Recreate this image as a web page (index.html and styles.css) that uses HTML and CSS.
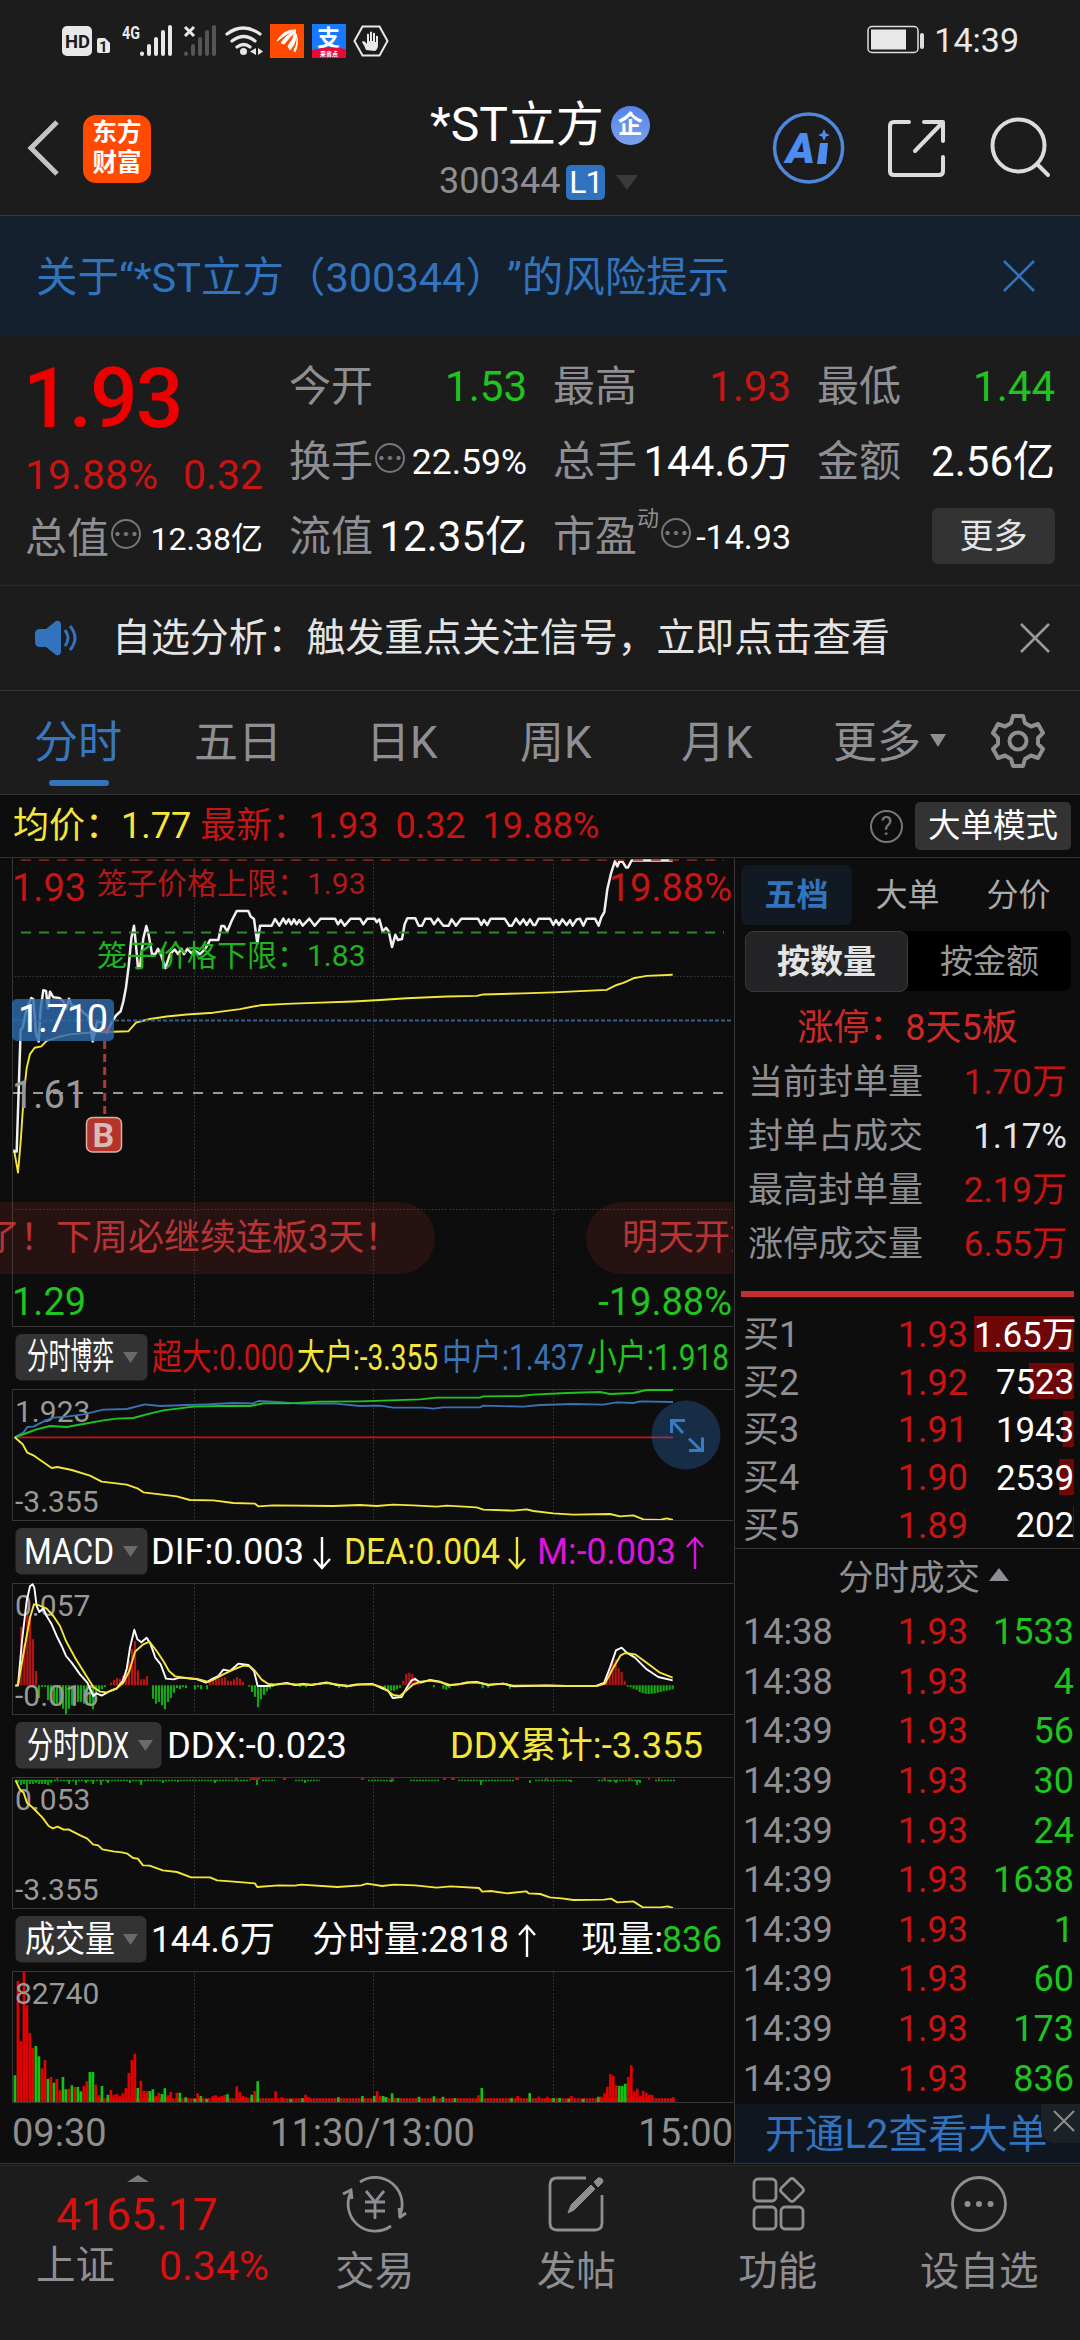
FILE: index.html
```html
<!DOCTYPE html>
<html lang="zh-CN">
<head>
<meta charset="utf-8">
<title>*ST立方 300344</title>
<link rel="stylesheet" href="styles.css">
</head>
<body>
<div class="app">

<div class="status">
  <svg class="status-left" width="400" height="72" viewBox="0 0 400 72">
    <rect x="62" y="26" width="30" height="30" rx="5" fill="#e8e8e8"/>
    <text x="65" y="48" font-size="19" font-weight="700" fill="#1c1c1c" textLength="25" lengthAdjust="spacingAndGlyphs">HD</text>
    <path d="M97 40q0-2 2-2h6l5 5v8q0 2-2 2h-9q-2 0-2-2z" fill="#e8e8e8"/>
    <text x="99" y="52" font-size="15" font-weight="700" fill="#1c1c1c">1</text>
    <text x="122" y="39" font-size="18" font-weight="700" fill="#e8e8e8" textLength="18" lengthAdjust="spacingAndGlyphs">4G</text>
    <g stroke-width="4" stroke-linecap="round">
      <path d="M142 53.5v.5M149 46v8M156 39v15M163 32v22M170 27v27" stroke="#e8e8e8"/>
      <path d="M186 53.5v.5M193 46v8M200 39v15M207 32v22M214 27v27" stroke="#555"/>
    </g>
    <path d="M185 27l9 9m0-9l-9 9" stroke="#e8e8e8" stroke-width="3"/>
    <g fill="none" stroke="#e8e8e8" stroke-width="3.2" stroke-linecap="round">
      <path d="M227 34q16-12 33 0M232 41q12-9 23 0M237 47q7-5 13 0"/>
    </g>
    <circle cx="243.500" cy="51.500" r="3.500" fill="#e8e8e8"/>
    <path d="M256 48v7l-6-3.500zM258 48v7l5-3.500z" fill="#e8e8e8"/>
    <rect x="270" y="24" width="34" height="34" fill="#ff4a00"/>
    <path d="M277 41q7-12 19-11-9 3-19 11zM281 43q6-9 15-12-6 6-12 13zM288 46q6-7 7-15 3 10-5 19zM294 50q5-8 2-16 3 10-1 18z" fill="#fff" stroke="#fff"/>
    <rect x="312" y="24" width="34" height="34" fill="#1878ff"/>
    <text x="317" y="46" font-size="23" font-weight="700" fill="#fff">支</text>
    <path d="M312 50q17-5 34-1v9h-34z" fill="#e60b34"/>
    <text x="320" y="56" font-size="6" font-weight="700" fill="#fff">来省点</text>
    <path d="M362.500 26.500h17l8 14.500-8 14.500h-17l-8-14.500z" fill="none" stroke="#e8e8e8" stroke-width="2"/>
    <path d="M366 50q-2-5-4-8l1-1q2 0 4 3V34q2-1 2 1v6h1v-9q2-1 2 0v9h1v-8q2-1 2 1v8h1v-6q2-1 2 1v8q0 4-3 6z" fill="#e8e8e8"/>
  </svg>
  <div class="status-right">
    <svg width="54" height="30" viewBox="0 0 54 30"><rect x="1" y="1.500" width="50" height="26" rx="4" fill="none" stroke="#ddd" stroke-width="1.500"/><rect x="4" y="4.500" width="35" height="20" fill="#e8e8e8"/></svg>
    <i class="nub"></i><span>14:39</span>
  </div>
</div>

<header class="head">
  <svg class="back" width="36" height="60" viewBox="0 0 36 60"><path d="M33 4L7 30l26 26" fill="none" stroke="#c4c4c4" stroke-width="5"/></svg>
  <div class="logo"><span>东方</span><span>财富</span></div>
  <div class="title">
    <div class="name">*ST立方<b class="ent">企</b></div>
    <div class="code">300344<b class="l1">L1</b><i class="tri-d"></i></div>
  </div>
  <svg class="tools" width="300" height="80" viewBox="770 108 300 80" fill="none">
    <circle cx="808.600" cy="148" r="34" stroke="#4f87dc" stroke-width="3.500"/>
    <text x="786" y="163" font-size="43" font-weight="900" font-style="italic" fill="#4d8cf0" textLength="29" lengthAdjust="spacingAndGlyphs">A</text>
    <path d="M820 143h8l-2 21h-9z" fill="#4d8cf0"/>
    <path d="M824 129l2 4.500 4 1.500-4 1.500-2 4.500-2-4.500-4-1.500 4-1.500z" fill="#4d8cf0"/>
    <g stroke="#dcdcdc" stroke-width="4" stroke-linecap="round" stroke-linejoin="round">
      <path d="M909 122h-15q-4 0-4 4v45q0 4 4 4h45q4 0 4-4v-14M924 122h19v19M942 123l-27 28"/>
      <ellipse cx="1018.500" cy="145.500" rx="26" ry="26"/><path d="M1037 164l11 11"/>
    </g>
  </svg>
</header>

<div class="risk"><span>关于“*ST立方（300344）”的风险提示</span>
  <svg width="34" height="34" viewBox="0 0 34 34"><path d="M2 2l30 30M32 2L2 32" stroke="#3273bd" stroke-width="2.600"/></svg>
</div>

<section class="stats">
  <div class="c0">
    <div class="big">1.93</div>
    <div class="chg"><span>19.88%</span><span>0.32</span></div>
    <div class="cell"><label>总值</label><i class="dots"></i><span class="v s32">12.38亿</span></div>
  </div>
  <div class="col">
    <div class="cell"><label>今开</label><span class="v g">1.53</span></div>
    <div class="cell"><label>换手</label><i class="dots"></i><span class="v s36">22.59%</span></div>
    <div class="cell"><label>流值</label><span class="v">12.35亿</span></div>
  </div>
  <div class="col">
    <div class="cell"><label>最高</label><span class="v r">1.93</span></div>
    <div class="cell"><label>总手</label><span class="v">144.6万</span></div>
    <div class="cell"><label>市盈<sup>动</sup></label><i class="dots"></i><span class="v s34">-14.93</span></div>
  </div>
  <div class="col">
    <div class="cell"><label>最低</label><span class="v g">1.44</span></div>
    <div class="cell"><label>金额</label><span class="v">2.56亿</span></div>
    <div class="cell"><button class="more">更多</button></div>
  </div>
</section>

<div class="notice">
  <svg width="46" height="38" viewBox="0 0 46 38"><path d="M1 15q0-5 5-5h6L22 2q4-1 5 3v28q-1 4-5 3l-10-8H6q-5 0-5-5z" fill="#3273bd"/><path d="M31 11q6 8 0 16M36 7q10 12 0 24" fill="none" stroke="#3273bd" stroke-width="3"/></svg>
  <span>自选分析：触发重点关注信号，立即点击查看</span>
  <svg class="x" width="30" height="30" viewBox="0 0 30 30"><path d="M1 1l28 28M29 1L1 29" stroke="#999" stroke-width="2.600"/></svg>
</div>

<nav class="tabs">
  <span class="on">分时</span><span>五日</span><span>日K</span><span>周K</span><span>月K</span><span>更多<i></i></span>
  <svg width="54" height="54" viewBox="-27 -27 54 54" fill="none" stroke="#8e8e93" stroke-width="4" stroke-linejoin="round"><path d="M-5-25H5L7-18L13-14.500L20-17L25-8L20-3V3L25 8L20 17L13 14.500L7 18L5 25H-5L-7 18L-13 14.500L-20 17L-25 8L-20 3V-3L-25-8L-20-17L-13-14.500L-7-18Z"/><circle r="8.500"/></svg>
</nav>

<div class="info">
  <span class="y">均价：1.77</span><span class="r">最新：1.93</span><span class="r">0.32</span><span class="r">19.88%</span>
  <b class="q">?</b><button>大单模式</button>
</div>

<main class="body">
<div class="charts">
<svg width="735" height="468" viewBox="0 0 735 468">
  <g class="dot"><path d="M194.500 2V468M373.500 2V468M553.500 2V468M15 118.500H733M15 351.500H733"/></g>
  <path class="frame" d="M12.500 0V468"/>
  <path d="M13 235H733" stroke="#999" stroke-width="2" stroke-dasharray="10 10"/>
  <g class="line" transform="matrix(.33333 0 0 .35076 0 -67)">
    <path stroke="#f5e63c" d="M42 1022L54 1088 62 1000 72 860 80 790 90 750 104 732 124 728 140 712 180 700 210 694 250 690 300 688 385 685 408 660 450 650 500 643 560 637 640 632 720 622 780 611 860 607 940 604 1060 600 1140 596 1220 591 1340 586 1430 584 1450 580 1570 577 1660 574 1820 567 1850 553 1870 547 1900 534 1940 527 2018 524"/>
    <path stroke="#f0f0f0" class="w3" d="M40 1028H50L62 680 68 675 80 620 94 590 100 594 108 690 116 714 122 620 130 568 138 570 144 620 150 572 160 588 178 590 190 600 200 620 207 592 215 612 235 615 250 632 262 640 270 660 278 714 286 680 292 655 305 660 320 690 335 660 348 640 362 628 370 600 378 560 386 500 394 420 402 384 408 440 414 505 420 500 430 420 439 385 446 410 456 465 466 465 474 450 484 470 496 505 510 465 524 452 534 465 544 450 552 465 562 450 574 462 584 455 600 465 616 450 630 425 655 425 664 385 672 385 682 400 695 370 710 342 745 342 752 358 762 365 772 435 780 384 815 384 825 365 838 384 850 364 858 378 866 366 874 380 882 366 890 380 898 368 908 384 928 364 944 384 962 364 1005 364 1014 380 1022 368 1034 384 1052 364 1080 364 1090 380 1102 364 1124 364 1130 374 1138 366 1148 400 1158 390 1166 400 1176 445 1186 410 1194 425 1206 422 1214 380 1222 363 1246 363 1256 384 1266 384 1276 364 1292 364 1302 380 1314 364 1330 384 1346 384 1355 366 1368 384 1384 364 1434 364 1444 382 1452 368 1462 382 1472 364 1514 364 1528 384 1536 384 1548 364 1560 380 1570 366 1580 382 1590 366 1600 382 1606 382 1616 364 1650 364 1660 382 1668 368 1677 382 1687 366 1700 382 1710 368 1718 384 1730 366 1740 364 1750 384 1760 364 1785 364 1796 384 1804 360 1813 345 1822 280 1833 235 1845 200 1852 215 1858 202 1868 202 1878 218 1884 218 1895 198 2018 198"/>
  </g>
  <path d="M21 2H724" stroke="#a01c1c" stroke-opacity=".75" stroke-width="2" stroke-dasharray="10 8"/>
  <path d="M21 74.500H724" stroke="#2a8a2a" stroke-width="2" stroke-dasharray="10 8"/>
  <path d="M13 162.500H733" stroke="#34618f" stroke-width="2" stroke-dasharray="4 2"/>
  <path d="M104.700 183V260" stroke="#b03a32" stroke-width="3" stroke-dasharray="8 5"/>
  <rect x="12" y="141" width="102" height="42" rx="5" fill="#2d69ab" fill-opacity=".82"/>
  <circle cx="106" cy="171" r="4" fill="#a05080" fill-opacity=".5"/>
  <rect x="86.500" y="259.500" width="35" height="34.500" rx="6" fill="#b43428" stroke="#d8b0ac" stroke-width="1.500"/>
  <text x="92.500" y="289" font-size="34" font-weight="700" fill="#d6bab8">B</text>
  <path d="M0 344H399a36 36 0 0 1 0 72H0zM733 344H622a36 36 0 0 0 0 72H733z" fill="#c83232" fill-opacity=".14"/>
  <text x="-16" y="391.500" font-size="36" fill="#b83434">了！下周必继续连板3天！</text>
  <svg width="733" height="468"><text x="622" y="391.500" font-size="36" fill="#b83434">明天开始</text></svg>
  <g font-size="38">
    <text x="12" y="43" fill="#c91414">1.93</text>
    <text x="732" y="43" fill="#c91414" text-anchor="end">19.88%</text>
    <text x="18" y="174" fill="#fff" textLength="90">1.710</text>
    <text x="12" y="250" fill="#999">1.61</text>
    <text x="12" y="457" fill="#1fc41f">1.29</text>
    <text x="732" y="457" fill="#1fc41f" text-anchor="end">-19.88%</text>
  </g>
  <text x="97" y="35.500" font-size="30" fill="#b31818">笼子价格上限：1.93</text>
  <text x="97" y="108" font-size="30" fill="#1fb41f">笼子价格下限：1.83</text>
</svg>

<svg width="735" height="194" viewBox="0 0 735 194">
  <rect class="tag" x="15.500" y="8" width="132" height="46.500" rx="6"/><path class="caret" d="M123 26h15l-7.500 11z"/>
  <g class="lab">
    <text x="27" y="43" fill="#fff" textLength="87" lengthAdjust="spacingAndGlyphs">分时博弈</text>
    <text x="152" y="44" fill="#c91414" textLength="142" lengthAdjust="spacingAndGlyphs">超大:0.000</text>
    <text x="297" y="44" fill="#f5e63c" textLength="141" lengthAdjust="spacingAndGlyphs">大户:-3.355</text>
    <text x="442" y="44" fill="#3a72b4" textLength="142" lengthAdjust="spacingAndGlyphs">中户:1.437</text>
    <text x="587" y="44" fill="#1fc41f" textLength="142" lengthAdjust="spacingAndGlyphs">小户:1.918</text>
  </g>
  <path class="dot" d="M194.500 64V194M373.500 64V194M553.500 64V194"/>
  <path class="frame" d="M12 .5H733M733 63.500H12.500V194"/>
  <text class="ax" x="15" y="95.500">1.923</text><text class="ax" x="15" y="186">-3.355</text>
  <g class="line" transform="matrix(.33333 0 0 .33333 0 -5)">
    <path stroke="#c91414" d="M44 349H2019"/>
    <path stroke="#3a72b4" d="M44 349L70 335 82 318 100 317 130 302 160 290 200 287 250 280 310 266 380 264 435 250 480 255 560 252 620 250 700 246 760 247 775 240 830 243 900 248 1000 247 1080 255 1140 254 1180 260 1270 260 1300 263 1330 259 1440 259 1450 254 1570 257 1620 252 1720 249 1810 251 1850 244 1900 246 1920 241 2019 243"/>
    <path stroke="#1fc41f" d="M44 349L80 336 110 325 150 315 200 318 250 309 310 298 350 293 400 291 440 280 490 268 580 257 660 255 750 255 790 247 870 247 960 242 1080 241 1150 239 1260 235 1310 230 1440 230 1450 226 1560 225 1600 221 1700 216 1800 213 1830 219 1900 216 1940 207 2019 207"/>
    <path stroke="#f5e63c" d="M44 349L68 370 82 395 100 403 155 441 172 438 215 447 270 464 305 482 380 491 412 502 430 514 480 520 530 526 570 537 640 538 700 546 765 548 775 556 820 553 1000 555 1080 552 1130 555 1180 551 1240 553 1310 557 1340 554 1430 559 1450 566 1540 569 1580 565 1600 570 1660 577 1720 581 1830 579 1860 586 1900 583 1930 595 1980 597 2000 592 2019 597"/>
  </g>
  <circle cx="686" cy="109" r="34.500" fill="#2f73bf" fill-opacity=".32"/>
  <path d="M671.500 107V94.500H685M672 95l11 12M689 112.500l12 12M702.500 111.500v13H689" fill="none" stroke="#3a79c4" stroke-width="3"/>
</svg>

<svg width="735" height="194" viewBox="0 0 735 194">
  <rect class="tag" x="15.500" y="8" width="132" height="46.500" rx="6"/><path class="caret" d="M123 26h15l-7.500 11z"/>
  <g class="lab">
    <text x="24" y="43.500" fill="#fff" textLength="90" lengthAdjust="spacingAndGlyphs">MACD</text>
    <text x="151" y="44" fill="#fff" textLength="153" lengthAdjust="spacingAndGlyphs">DIF:0.003</text>
    <text x="344" y="44" fill="#f5e63c" textLength="156" lengthAdjust="spacingAndGlyphs">DEA:0.004</text>
    <text x="537" y="44" fill="#dc14dc" textLength="139" lengthAdjust="spacingAndGlyphs">M:-0.003</text>
  </g>
  <g fill="none" stroke-width="2.400"><path d="M322 17v31m-8-9l8 9 8-9" stroke="#fff"/><path d="M517 17v31m-8-9l8 9 8-9" stroke="#f5e63c"/><path d="M695 49V18m-8 9l8-9 8 9" stroke="#dc14dc"/></g>
  <path class="dot" d="M194.500 64V194M373.500 64V194M553.500 64V194"/>
  <path class="frame" d="M12 .5H733M733 63.500H12.500V194"/>
  <text class="ax" x="15" y="95.500">0.057</text>
  <g transform="matrix(.33333 0 0 .33333 0 -199)" fill="none">
    <path stroke="#b91414" stroke-width="6.500" d="M55 1093v-12M64 1093v-175M73 1093v-120M82 1093v-210M90 1093v-210M99 1093v-138M108 1093v-43M333 1093v-8M342 1093v-16M351 1093v-22M360 1093v-20M369 1093v-28M378 1093v-50M387 1093v-75M396 1093v-110M405 1093v-133M414 1093v-45M423 1093v-18M432 1093v-18M441 1093v-28M630 1093v-14M639 1093v-18M648 1093v-16M657 1093v-20M666 1093v-22M675 1093v-24M684 1093v-14M693 1093v-12M702 1093v-18M711 1093v-24M720 1093v-20M729 1093v-10M1210 1093v-14M1219 1093v-34M1228 1093v-38M1237 1093v-34M1246 1093v-24M1255 1093v-12M1811 1093v-8M1820 1093v-28M1829 1093v-50M1838 1093v-74M1847 1093v-78M1856 1093v-52M1865 1093v-40M1874 1093v-14"/>
    <path stroke="#12aa12" stroke-width="6.500" d="M117 1093v38M126 1093v5M135 1093v5M144 1093v45M153 1093v50M162 1093v60M171 1093v55M180 1093v60M189 1093v70M198 1093v86M207 1093v70M216 1093v60M225 1093v55M234 1093v50M243 1093v50M252 1093v55M261 1093v60M270 1093v60M279 1093v72M288 1093v30M297 1093v20M306 1093v12M315 1093v5M459 1093v40M468 1093v55M477 1093v50M486 1093v60M495 1093v72M504 1093v50M513 1093v38M522 1093v22M531 1093v8M540 1093v12M549 1093v6M558 1093v8M585 1093v12M594 1093v6M603 1093v12M621 1093v12M747 1093v4M756 1093v20M765 1093v34M774 1093v66M783 1093v42M792 1093v28M801 1093v18M810 1093v10M819 1093v5M900 1093v5M918 1093v6M1017 1093v8M1040 1093v9M1155 1093v10M1164 1093v14M1173 1093v16M1182 1093v16M1191 1093v12M1200 1093v7M1302 1093v6M1330 1093v10M1339 1093v13M1348 1093v9M1448 1093v9M1465 1093v7M1530 1093v10M1883 1093v4M1892 1093v6M1901 1093v10M1910 1093v14M1919 1093v20M1928 1093v23M1937 1093v25M1946 1093v26M1955 1093v25M1964 1093v24M1973 1093v22M1982 1093v20M1991 1093v18M2000 1093v16M2009 1093v14M2018 1093v12"/>
  </g>
  <text class="ax" x="15" y="186">-0.016</text>
  <g class="line" transform="matrix(.33333 0 0 .33333 0 -199)">
    <path stroke="#fff" d="M46 1094L54 1092 66 960 80 840 90 796 98 790 103 800 110 855 118 873 130 862 140 885 155 910 170 945 185 975 198 1005 215 1025 240 1060 262 1085 280 1125 290 1117 305 1124 330 1110 350 1102 368 1080 380 1045 390 980 403 926 412 955 424 964 440 950 452 970 466 1010 482 1030 498 1073 520 1075 540 1070 590 1074 618 1085 640 1072 655 1065 670 1046 690 1050 715 1028 745 1032 762 1050 773 1095 805 1095 830 1090 860 1086 885 1092 910 1089 935 1092 980 1084 1010 1092 1045 1095 1070 1090 1118 1089 1148 1103 1165 1110 1178 1131 1205 1128 1220 1100 1235 1078 1245 1074 1262 1085 1290 1077 1320 1082 1345 1093 1375 1090 1400 1084 1430 1083 1465 1092 1510 1088 1540 1096 1640 1094 1700 1095 1790 1094 1812 1086 1830 1040 1848 988 1865 980 1880 995 1905 1010 1940 1045 1975 1068 2018 1078"/>
    <path stroke="#f5e63c" d="M46 1094H54L70 1000 90 890 102 850 115 852 140 863 160 885 180 915 198 960 225 1010 255 1058 280 1098 300 1112 320 1114 350 1103 370 1085 388 1050 405 992 430 970 448 962 470 990 490 1020 507 1050 525 1066 560 1071 600 1076 625 1083 645 1074 670 1060 700 1046 730 1034 750 1036 765 1050 785 1076 805 1089 830 1091 860 1087 890 1091 935 1091 980 1086 1010 1090 1045 1095 1080 1091 1118 1090 1150 1100 1180 1122 1200 1125 1220 1108 1240 1090 1262 1082 1290 1079 1320 1083 1350 1092 1380 1089 1410 1085 1435 1085 1465 1091 1510 1088 1540 1094 1640 1093 1700 1095 1790 1095 1815 1088 1840 1040 1862 1003 1876 996 1905 1000 1940 1025 1980 1055 2018 1070"/>
  </g>
</svg>

<svg width="735" height="194" viewBox="0 0 735 194">
  <rect class="tag" x="15.500" y="8" width="146" height="46.500" rx="6"/><path class="caret" d="M138 26h15l-7.500 11z"/>
  <g class="lab">
    <text x="27" y="44" fill="#fff" textLength="102" lengthAdjust="spacingAndGlyphs">分时DDX</text>
    <text x="167" y="44" fill="#fff" textLength="180" lengthAdjust="spacingAndGlyphs">DDX:-0.023</text>
    <text x="450" y="44" fill="#f5e63c" textLength="253" lengthAdjust="spacingAndGlyphs">DDX累计:-3.355</text>
  </g>
  <path class="dot" d="M194.500 64V194M373.500 64V194M553.500 64V194"/>
  <path class="frame" d="M12 .5H733M733 63.500H12.500V194"/>
  <g fill="none" stroke="#12a012" stroke-width="2">
    <path d="M15 66.500H250M262 66.500H275M295 66.500H320M368 66.500H395M410 66.500H440M458 66.500H515M535 66.500H572M598 66.500H640M655 66.500H675" stroke-width="1.500" stroke-dasharray="2 1"/>
    <path d="M18 66v3M21 66v5M24 66v4M27 66v10M30 66v4M33 66v4M36 66v3M39 66v4M42 66v4M45 66v4M48 66v5M51 66v3M69 66v4M76 66v5M86 66v3M93 66v4M101 66v5M108 66v3M130 66v3M141 66v5M163 66v3M178 66v2M215 66v3M257 66v5M305 66v3M391 66v2M481 66v5M530 66v3M571 66v2M610 66v2M616 66v3M637 66v5M640 66v3"/>
    <path stroke="#a01818" d="M57 63v3M235 65h3M250 65h10M283 65h3M361 65h3M391 65h3M443 65h3M451 65h4M515 65h4M545 65h3M603 65h3M628 65h3M648 65h2M658 65h2"/>
  </g>
  <text class="ax" x="15" y="95.500">0.053</text><text class="ax" x="15" y="186">-3.355</text>
  <g class="line" transform="matrix(.4719 0 0 .33333 0 7)"><path stroke="#f5e63c" d="M33 178L42 205 50 215 57 245 68 258 90 290 103 315 112 322 122 317 135 326 145 325 170 343 185 353 197 370 208 373 217 385 240 391 258 394 270 398 282 411 292 413 303 433 317 434 345 448 375 453 405 469 445 469 460 478 495 482 540 487 545 498 590 493 625 494 638 491 715 498 765 493 778 488 810 495 835 491 880 493 925 500 955 496 1015 501 1022 512 1040 510 1075 517 1115 511 1120 517 1145 519 1165 529 1190 532 1215 537 1280 536 1295 533 1308 544 1342 541 1362 559 1400 559 1415 556 1426 561"/></g>
</svg>

<svg width="735" height="194" viewBox="0 0 735 194">
  <rect class="tag" x="15.500" y="8" width="131" height="46.500" rx="6"/><path class="caret" d="M123 26h15l-7.500 11z"/>
  <g class="lab" fill="#fff">
    <text x="25" y="44" textLength="90" lengthAdjust="spacingAndGlyphs">成交量</text>
    <text x="151" y="44" textLength="124" lengthAdjust="spacingAndGlyphs">144.6万</text>
    <text x="312" y="44" textLength="197" lengthAdjust="spacingAndGlyphs">分时量:2818</text>
    <text x="581" y="44" textLength="82" lengthAdjust="spacingAndGlyphs">现量:</text>
    <text x="662" y="44" fill="#1fc41f" textLength="60" lengthAdjust="spacingAndGlyphs">836</text>
  </g>
  <path d="M527 49V18m-8 9l8-9 8 9" fill="none" stroke="#fff" stroke-width="2.400"/>
  <path class="dot" d="M194.500 64V194M373.500 64V194M553.500 64V194"/>
  <path class="frame" d="M12 .5H733M733 63.500H12.500V194"/>
  <g transform="matrix(.4719 0 0 .33333 0 -187)" fill="none" stroke-width="5.600">
    <path stroke="#c80f0f" stroke-width="11" stroke-dasharray="5.400 .96" d="M205 1137.500H1430"/>
    <path stroke="#e60000" d="M38 1143v-363M44.400 1143v-182M50.700 1143v-390M57 1143v-290M63.400 1143v-207M69.800 1143v-162M89 1143v-101M95.300 1143v-125M108 1143v-75M120.600 1143v-69M127 1143v-35M146 1143v-40M158.700 1143v-45M177.700 1143v-48M184 1143v-62M203 1143v-52M209.500 1143v-20M235 1143v-36M241.300 1143v-22M247.700 1143v-24M254 1143v-18M260.400 1143v-26M266.700 1143v-42M273 1143v-87M279.400 1143v-126M285.800 1143v-145M298.500 1143v-64M304.800 1143v-34M311.200 1143v-32M330 1143v-18M336.600 1143v-28M355.600 1143v-20M362 1143v-30M374.700 1143v-28M419 1143v-26M451 1143v-17M457 1143v-20M463.500 1143v-16M470 1143v-18M476 1143v-21M501.700 1143v-47M508 1143v-30M514.400 1143v-18M520.700 1143v-16M539.700 1143v-33M584 1143v-32M597 1143v-14M647.600 1143v-22M654 1143v-16M799 1143v-32M806 1143v-18M1014 1143v-20M1097 1143v-18M1142 1143v-16M1160 1143v-16M1211 1143v-18M1274 1143v-16M1281 1143v-26M1287 1143v-46M1293.400 1143v-84M1299.700 1143v-78M1306 1143v-50M1331.400 1143v-75M1337.800 1143v-110M1344 1143v-32M1350.500 1143v-40M1357 1143v-18M1363 1143v-34M1369.500 1143v-28M1376 1143v-22M1382 1143v-22M1426 1143v-14"/>
    <path stroke="#12c412" d="M31.700 1143v-80M76 1143v-168M82.500 1143v-137M101.600 1143v-69M114.300 1143v-58M133.400 1143v-75M139.700 1143v-38M152.400 1143v-50M165 1143v-45M171.500 1143v-32M190.500 1143v-90M196.900 1143v-90M216 1143v-48M228.600 1143v-22M292 1143v-42M317.500 1143v-33M323.900 1143v-38M343 1143v-24M349.300 1143v-41M381 1143v-28M393.700 1143v-14M413 1143v-10M425.500 1143v-18M438 1143v-9M482 1143v-23M533.400 1143v-22M546 1143v-62M616 1143v-9M641 1143v-11M717 1143v-14M768 1143v-18M793 1143v-18M812 1143v-18M818 1143v-15M831 1143v-26M843.500 1143v-12M888 1143v-16M919.600 1143v-17M938.600 1143v-16M964 1143v-11M1021 1143v-42M1084 1143v-11M1122.500 1143v-27M1173 1143v-12M1186 1143v-12M1205 1143v-10M1236 1143v-9M1268 1143v-16M1312.400 1143v-48M1318.700 1143v-48M1325 1143v-55"/>
  </g>
  <text class="ax" x="15" y="95.500">82740</text>
</svg>
<div class="times"><span>09:30</span><span>11:30/13:00</span><span>15:00</span></div>
</div>

<aside class="side">
  <div class="stabs"><b>五档</b><span>大单</span><span>分价</span></div>
  <div class="seg"><b>按数量</b><span>按金额</span></div>
  <div class="limit">
    <p class="lt">涨停：8天5板</p>
    <p><label>当前封单量</label><span>1.70万</span></p>
    <p><label>封单占成交</label><span class="w">1.17%</span></p>
    <p><label>最高封单量</label><span>2.19万</span></p>
    <p><label>涨停成交量</label><span>6.55万</span></p>
  </div>
  <div class="redbar"></div>
  <div class="bids">
    <p><label>买1</label><span>1.93</span><b style="--w:100px">1.65万</b></p>
    <p><label>买2</label><span>1.92</span><b style="--w:45px">7523</b></p>
    <p><label>买3</label><span>1.91</span><b style="--w:11px">1943</b></p>
    <p><label>买4</label><span>1.90</span><b style="--w:15px">2539</b></p>
    <p><label>买5</label><span>1.89</span><b style="--w:1px">202</b></p>
  </div>
  <div class="deal">分时成交<i></i></div>
  <div class="deals">
    <p><label>14:38</label><span>1.93</span><b>1533</b></p>
    <p><label>14:38</label><span>1.93</span><b>4</b></p>
    <p><label>14:39</label><span>1.93</span><b>56</b></p>
    <p><label>14:39</label><span>1.93</span><b>30</b></p>
    <p><label>14:39</label><span>1.93</span><b>24</b></p>
    <p><label>14:39</label><span>1.93</span><b>1638</b></p>
    <p><label>14:39</label><span>1.93</span><b>1</b></p>
    <p><label>14:39</label><span>1.93</span><b>60</b></p>
    <p><label>14:39</label><span>1.93</span><b>173</b></p>
    <p><label>14:39</label><span>1.93</span><b>836</b></p>
  </div>
  <div class="l2">开通L2查看大单<i class="close"><svg width="22" height="22" viewBox="0 0 22 22"><path d="M1 1l20 20M21 1L1 21" stroke="#8e8e8e" stroke-width="2"/></svg></i></div>
</aside>
</main>

<footer class="foot">
  <div class="idx"><i></i><div class="pt">4165.17</div><div class="sub"><span>上证</span><b>0.34%</b></div></div>
  <div class="item"><svg width="68" height="60" viewBox="-34 -30 68 60"><path d="M-15-22A27 27 0 0 1 24 13M16 22A27 27 0 0 1-24-12M24 14l7-5M25 13l-1-9M-32-10l8-4 1 9" fill="none"/><path d="M-9-13L0-2 9-13M0-2V15M-10-2H10M-10 7H10" fill="none"/></svg>交易</div>
  <div class="item"><svg width="68" height="60" viewBox="-34 -30 68 60"><path d="M10-26H-19Q-26-26-26-19V19Q-26 26-19 26H19Q26 26 26 19V-9" fill="none"/><path d="M-8 9L-5 1 15-19 19-15-2 6zM18-22l4-4q2-1 4 1t0 4l-4 4z" fill="#8e8e93" stroke-width="1"/></svg>发帖</div>
  <div class="item"><svg width="68" height="60" viewBox="-34 -30 68 60" fill="none"><rect x="-24" y="-25" width="22" height="22" rx="4"/><rect x="-24" y="3" width="22" height="22" rx="4"/><rect x="3" y="3" width="22" height="22" rx="4"/><rect x="5" y="-23" width="18" height="18" rx="3" transform="rotate(45 14 -14)"/></svg>功能</div>
  <div class="item"><svg width="68" height="60" viewBox="-34 -30 68 60"><circle r="26.500" fill="none"/><g fill="#8e8e93" stroke="none"><circle cx="-11.500" r="3"/><circle r="3"/><circle cx="11.500" r="3"/></g></svg>设自选</div>
</footer>
</div>
</body>
</html>
```
FILE: styles.css
```css
* { box-sizing: border-box; margin: 0; padding: 0; }
body { background: #1c1c1c; }
.app { width: 1080px; height: 2340px; display: flex; flex-direction: column; overflow: hidden; background: #1c1c1c; color: #8e8e93; font-family: Roboto, "Noto Sans CJK SC", sans-serif; font-size: 36px; line-height: 1.2; white-space: nowrap; text-spacing-trim: space-all; }
svg { display: block; flex: none; }
b { font-weight: 400; }
i { font-style: normal; }
button { font: inherit; border: 0; display: block; }

.status { height: 72px; display: flex; justify-content: space-between; flex: none; }
.status-right { display: flex; align-items: center; padding: 9px 61px 0 0; font-size: 34px; color: #e8e8e8; }
.status-right svg { margin-bottom: 1px; }
.nub { width: 4px; height: 16px; border-radius: 2px; background: #ddd; margin: 0 10px 0 -1px; }

.head { height: 144px; flex: none; display: flex; align-items: flex-start; border-bottom: 1px solid #3a3a3a; padding-left: 24px; }
.back { margin-top: 46px; }
.logo { width: 68px; height: 68px; margin: 43px 0 0 23px; border-radius: 13px; background: #ff4a00; color: #fff; font-size: 24.500px; font-weight: 700; line-height: 30px; padding-top: 3px; display: flex; flex-direction: column; align-items: center; }
.title { width: 620px; height: 144px; padding: 24px 0 0 279px; }
.name { height: 58px; display: flex; align-items: center; color: #fff; font-size: 48px; line-height: 58px; }
.ent { width: 39px; height: 39px; border-radius: 50%; background: linear-gradient(#5183e8, #7ba2ee); font-size: 25px; font-weight: 700; line-height: 37px; text-align: center; margin-left: 7px; }
.code { height: 56px; display: flex; align-items: center; padding-left: 9px; }
.l1 { width: 39px; height: 35px; border-radius: 5px; background: #2f73bf; color: #fff; font-size: 32px; line-height: 35px; text-align: center; margin-left: 6px; letter-spacing: -1px; }
.tri-d { border: 11px solid transparent; border-top: 15px solid #3a3a3a; border-bottom: 0; margin-left: 11px; }
.tools { margin: 36px 0 0 -1px; }

.risk { height: 120px; flex: none; background: #14202e; color: #3273bd; font-size: 41.500px; display: flex; align-items: center; justify-content: space-between; padding: 0 44px 0 36px; }
.risk span { padding-top: 4px; }

.stats { height: 250px; flex: none; display: grid; grid-template-columns: repeat(4, 238px); column-gap: 26px; padding: 14px 0 0 25px; border-bottom: 1px solid #2a2a2a; font-size: 42px; }
.big { height: 97px; line-height: 97px; color: #ee0000; font-size: 84px; font-weight: 500; letter-spacing: -2px; margin-left: -2px; }
.chg { height: 56px; line-height: 56px; display: flex; justify-content: space-between; color: #c91414; font-size: 41px; }
.cell { height: 75px; display: flex; align-items: center; }
.c0 .cell { height: 72px; }
.v { margin-left: auto; color: #fff; }
.v.g { color: #1fc41f; }
.v.r { color: #c91414; }
.s32 { font-size: 32px; }
.s34 { font-size: 34px; }
.s36 { font-size: 35.500px; }
sup { font-size: 22px; vertical-align: 25px; line-height: 0; }
.dots { width: 30px; height: 30px; border: 2px solid #77777b; border-radius: 50%; margin: -10px 0 0 2px; background: radial-gradient(circle, #77777b 1.800px, transparent 2.300px) center / 8.500px 100%; background-clip: content-box; padding: 0 1px; }
.more { margin: -4px 0 0 115px; width: 124px; height: 56px; border-radius: 6px; background: #333; color: #e4e4e4; font-size: 34px; line-height: 54px; }

.notice { height: 105px; flex: none; display: flex; align-items: center; padding: 0 30px 0 34px; border-bottom: 1px solid #333; color: #e4e4e4; font-size: 38.900px; }
.notice span { margin-left: 32px; }
.notice .x { margin-left: auto; }

.tabs { height: 104px; flex: none; display: grid; grid-template-columns: 160px 172px 154px 161px 152px 156px 54px; align-items: center; padding: 2px 35px 0 34px; border-bottom: 1px solid #333; font-size: 44px; }
.tabs span { display: flex; align-items: center; height: 100%; }
.tabs .on { color: #3a76bd; position: relative; }
.tabs .on::after { content: ""; position: absolute; left: 15px; bottom: 8px; width: 60px; height: 6px; border-radius: 3px; background: #3273bd; }
.tabs i { border: 8px solid transparent; border-top: 13px solid #8e8e93; border-bottom: 0; margin: -6px 0 0 9px; }
.tabs svg { margin: -6px 0 0 2px; }

.info { height: 63px; flex: none; background: #0d0d0d; display: flex; align-items: center; padding: 0 9px 0 13px; border-bottom: 1px solid #333; color: #c91414; font-size: 36px; }
.info span { margin-right: 17px; padding-top: 1px; }
.info .y { color: #f5e63c; margin-right: 9px; }
.q { margin-left: auto; width: 33px; height: 33px; border: 2px solid #77777b; border-radius: 50%; color: #77777b; font-size: 25px; line-height: 29px; text-align: center; margin-right: 12px; }
.info button { width: 156px; height: 48px; background: #333; border-radius: 5px; color: #fff; font-size: 32.500px; line-height: 48px; }

.body { height: 1305px; flex: none; display: flex; background: #0d0d0d; }
.charts { width: 734px; flex: none; overflow: hidden; }
.dot { fill: none; stroke: #3c3c3c; stroke-dasharray: 1.500 2; }
.frame { fill: none; stroke: #383838; }
.line path { fill: none; vector-effect: non-scaling-stroke; stroke-width: 1.900; stroke-linejoin: round; }
.line .w3 { stroke-width: 2.500; }
.tag { fill: #333; }
.caret { fill: #6a6a6a; }
.lab { font-size: 36px; }
.ax { font-size: 30px; fill: #999; }
.times { height: 61px; border-top: 1px solid #383838; margin-left: 12px; padding: 2px 1px 0 0; display: flex; align-items: center; justify-content: space-between; font-size: 38px; color: #8e8e8e; }

.side { width: 346px; border-left: 1px solid #383838; color: #8e8e93; display: flex; flex-direction: column; }
.side p { display: flex; align-items: center; }
.stabs { display: grid; grid-template-columns: repeat(3, 111px); height: 59px; margin: 7px 0 0 6px; flex: none; font-size: 32px; line-height: 60px; text-align: center; color: #aaa; }
.stabs b { background: #111922; color: #3273bd; font-weight: 700; border-radius: 7px; }
.seg { display: grid; grid-template-columns: 1fr 1fr; margin: 7px 9px 0 10px; height: 60px; flex: none; background: #000; border-radius: 8px; font-size: 33px; line-height: 61px; text-align: center; color: #999; }
.seg b { background: #242426; border: 1px solid #3a3a3c; border-radius: 8px; color: #e4e4e4; font-weight: 700; line-height: 59px; }
.limit { margin-top: 11px; padding: 0 13px; font-size: 35px; color: #c91414; }
.limit p { height: 54px; justify-content: space-between; }
.limit label { color: #8e8e93; }
.limit .lt { justify-content: center; font-size: 36px; color: #cf2828; padding-right: 0; }
.limit .w { color: #e4e4e4; }
.redbar { height: 6px; background: #c43030; margin: 19px 6px 15px; flex: none; }
.bids { height: 237px; border-bottom: 1px solid #383838; flex: none; }
.bids p, .deals p { height: 47.600px; padding: 0 6px 0 8px; }
.bids label, .deals label { width: 100px; }
.bids span, .deals span { width: 125px; text-align: right; color: #c91414; }
.bids b { margin-left: auto; width: 100px; height: 36px; line-height: 39px; text-align: right; color: #fff; font-size: 35px; margin-top: -4px; background: linear-gradient(#6e0808, #6e0808) right / var(--w) 100% no-repeat; letter-spacing: -.2px; }
.deal { height: 59px; display: flex; justify-content: center; align-items: center; font-size: 35.500px; flex: none; padding-left: 32px; }
.deal i { border: 10px solid transparent; border-bottom: 13px solid #8e8e93; border-top: 0; margin: -8px 0 0 9px; }
.deals p { height: 49.600px; }
.deals b { margin-left: auto; color: #1fc41f; }
.l2 { flex: 1; background: #0f161f; color: #3273bd; font-size: 39.800px; display: flex; align-items: center; padding: 2px 0 0 30px; position: relative; }
.close { position: absolute; right: 0; top: 0; width: 39px; height: 39px; background: #1c2125; border-bottom-left-radius: 14px; padding: 6px 0 0 12px; }

.foot { flex: 1; border-top: 1px solid #383838; box-shadow: inset 0 1px #0d0d0d, inset 0 2px #2c2c2c; display: grid; grid-template-columns: 274px repeat(4, 201.500px); font-size: 39.500px; }
.idx { padding-top: 11px; color: #d81010; }
.idx i { display: block; width: 0; border: 11px solid transparent; border-bottom: 7px solid #77777b; border-top: 0; margin-left: 127px; }
.pt { margin-left: 56px; font-size: 44.500px; height: 67px; line-height: 67px; }
.sub { display: flex; line-height: 34px; margin-left: 36px; }
.sub span { color: #8e8e93; }
.sub b { margin-left: 44px; font-size: 41px; }
.item { display: flex; flex-direction: column; align-items: center; padding-top: 10px; line-height: 76px; }
.item svg { stroke: #8e8e93; stroke-width: 2.800; }
```
